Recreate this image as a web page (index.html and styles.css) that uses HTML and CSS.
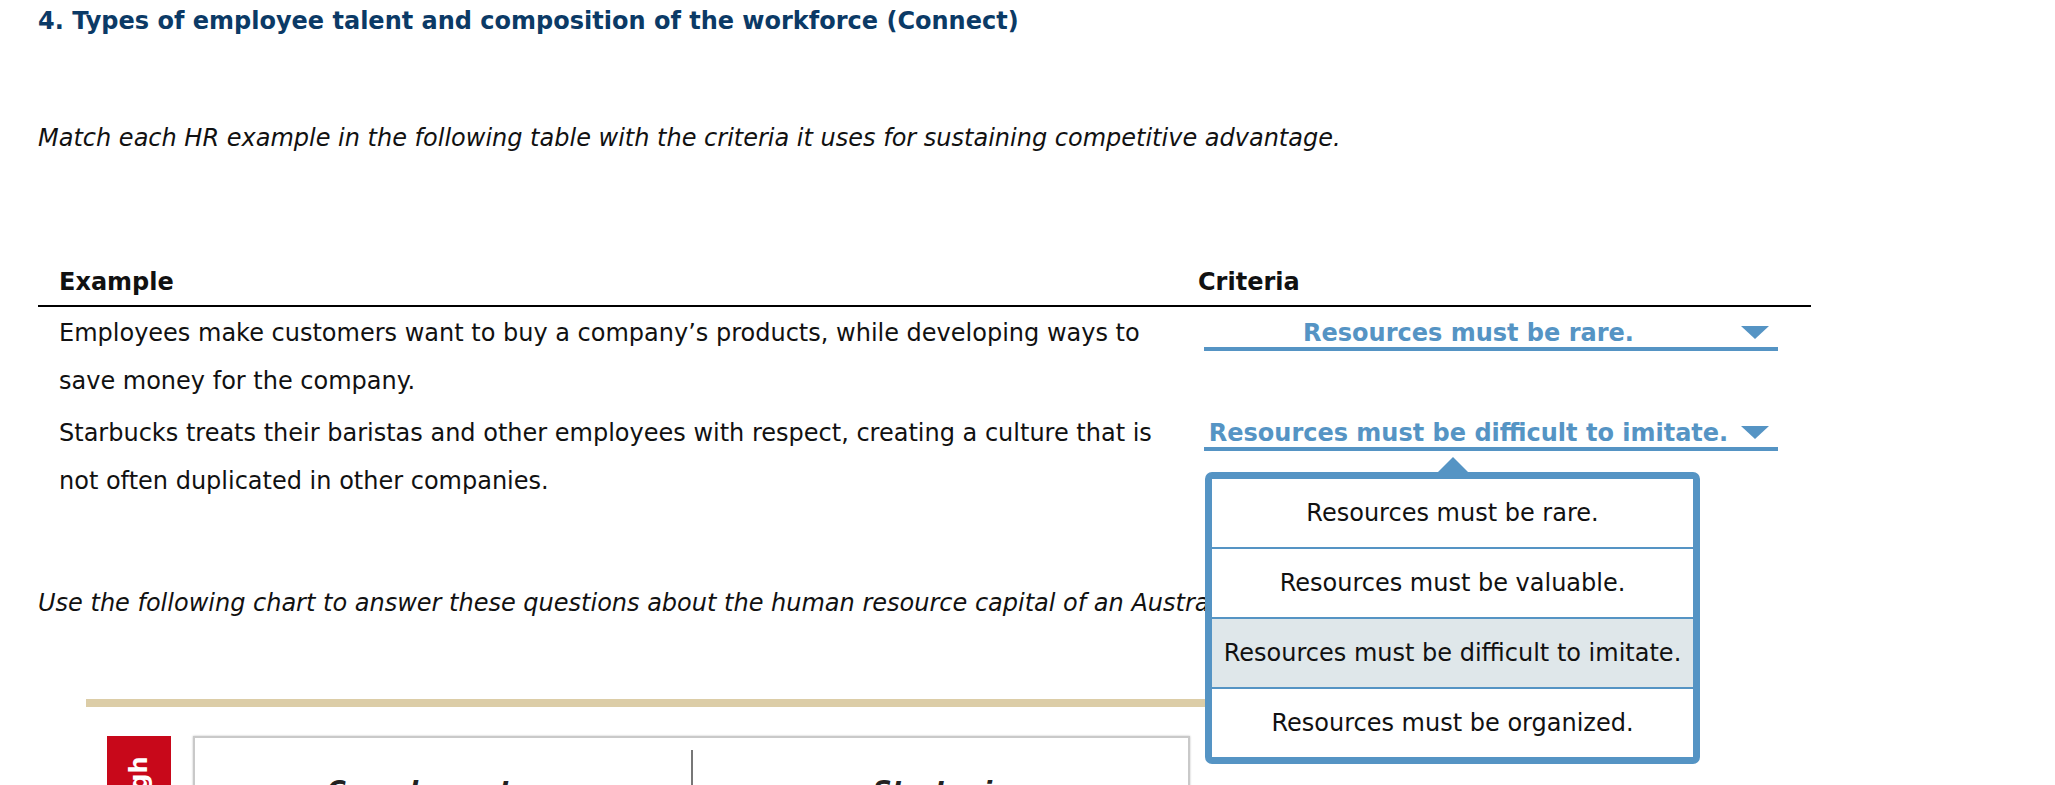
FILE: index.html
```html
<!DOCTYPE html>
<html lang="en">
<head>
<meta charset="utf-8">
<title>Types of employee talent</title>
<link rel="stylesheet" href="styles.css">
</head>
<body>
<div class="page">
  <h1 class="title">4. Types of employee talent and composition of the workforce (Connect)</h1>
  <p class="lead">Match each HR example in the following table with the criteria it uses for sustaining competitive advantage.</p>

  <div class="match-table">
    <div class="row head">
      <div class="c1">Example</div>
      <div class="c2">Criteria</div>
    </div>
    <div class="row">
      <div class="c1">Employees make customers want to buy a company’s products, while developing ways to save money for the company.</div>
      <div class="c2">
        <div class="dd">Resources must be rare.<span class="caret"></span></div>
      </div>
    </div>
    <div class="row">
      <div class="c1">Starbucks treats their baristas and other employees with respect, creating a culture that is not often duplicated in other companies.</div>
      <div class="c2">
        <div class="dd open">Resources must be difficult to imitate.<span class="caret"></span>
          <ul class="menu">
            <li class="item">Resources must be rare.</li>
            <li class="item">Resources must be valuable.</li>
            <li class="item selected">Resources must be difficult to imitate.</li>
            <li class="item">Resources must be organized.</li>
          </ul>
        </div>
      </div>
    </div>
  </div>

  <p class="lead chart-lead">Use the following chart to answer these questions about the human resource capital of an Australian company.</p>

  <div class="chart">
    <div class="rule"></div>
    <div class="chart-body">
      <div class="axis"><span class="axis-label">High</span></div>
      <div class="quad">
        <div class="cell">Complementary</div>
        <div class="divider"></div>
        <div class="cell">Strategic</div>
      </div>
    </div>
  </div>
</div>
</body>
</html>
```

FILE: styles.css
```css
html, body {
  margin: 0;
  padding: 0;
  background: #ffffff;
  overflow: hidden;
}

body {
  font-family: "DejaVu Sans", Verdana, sans-serif;
  font-size: 24px;
  color: #111111;
}

.page {
  padding-left: 38px;
  width: 1773px;
}

.title {
  margin: 0;
  padding-top: 7px;
  font-size: 24px;
  line-height: 28px;
  font-weight: bold;
  color: #0b3a66;
}

.lead {
  margin: 89px 0 0;
  font-style: italic;
  line-height: 28px;
}

.match-table {
  margin-top: 116px;
  display: flex;
  flex-direction: column;
}

.row {
  display: grid;
  grid-template-columns: 1160px 1fr;
  line-height: 48px;
  padding-top: 2px;
}

.row:last-child {
  padding-top: 4px;
}

.row.head {
  padding-top: 0;
  padding-bottom: 9px;
  line-height: 28px;
  font-weight: bold;
  border-bottom: 2px solid #000000;
}

.c1 {
  padding: 0 21px;
}

.c2 {
  padding: 0;
}

.dd {
  position: relative;
  display: inline-block;
  vertical-align: baseline;
  box-sizing: border-box;
  width: 574px;
  margin-left: 6px;
  padding-right: 45px;
  line-height: 28px;
  text-align: center;
  font-weight: bold;
  color: #5594c4;
  border-bottom: 4px solid #5594c4;
}

.caret {
  position: absolute;
  right: 9px;
  top: 7px;
  width: 0;
  height: 0;
  border-left: 14px solid transparent;
  border-right: 14px solid transparent;
  border-top: 13px solid #5594c4;
}

.menu {
  position: absolute;
  z-index: 10;
  left: 1px;
  top: 53px;
  box-sizing: border-box;
  width: 495px;
  margin: 0;
  padding: 0;
  list-style: none;
  background: #ffffff;
  border: 7px solid #5594c4;
  border-radius: 7px;
  font-weight: normal;
  color: #111111;
}

.menu::before {
  content: "";
  position: absolute;
  left: 50%;
  top: -22px;
  margin-left: -15px;
  width: 0;
  height: 0;
  border-left: 15px solid transparent;
  border-right: 15px solid transparent;
  border-bottom: 15px solid #5594c4;
}

.item {
  height: 68px;
  line-height: 68px;
  text-align: center;
  white-space: nowrap;
}

.item + .item {
  border-top: 2px solid #5594c4;
}

.item.selected {
  background: #dfe7ea;
}

.chart-lead {
  margin-top: 84px;
}

.chart {
  margin-top: 82px;
  padding-left: 48px;
}

.rule {
  width: 1160px;
  height: 8px;
  background: #dccda7;
}

.chart-body {
  display: flex;
  gap: 22px;
  margin-top: 29px;
  padding-left: 21px;
}

.axis {
  width: 64px;
  height: 260px;
  background: #c8081a;
  display: flex;
  justify-content: center;
  padding-top: 23px;
  box-sizing: border-box;
}

.axis-label {
  writing-mode: vertical-rl;
  transform: rotate(180deg);
  color: #ffffff;
  font-weight: bold;
  font-size: 24px;
  line-height: 28px;
  height: 60px;
}

.quad {
  box-sizing: border-box;
  width: 997px;
  height: 260px;
  border: 2px solid #c9c9c9;
  box-shadow: 0 0 2px rgba(0, 0, 0, 0.25);
  display: flex;
  align-items: flex-start;
}

.cell {
  flex: 1;
  text-align: center;
  padding-top: 38px;
  font-size: 26px;
  line-height: 30px;
  font-weight: bold;
  font-style: italic;
  color: #222222;
}

.divider {
  width: 2px;
  margin-top: 12px;
  height: 200px;
  background: #777777;
}
```
